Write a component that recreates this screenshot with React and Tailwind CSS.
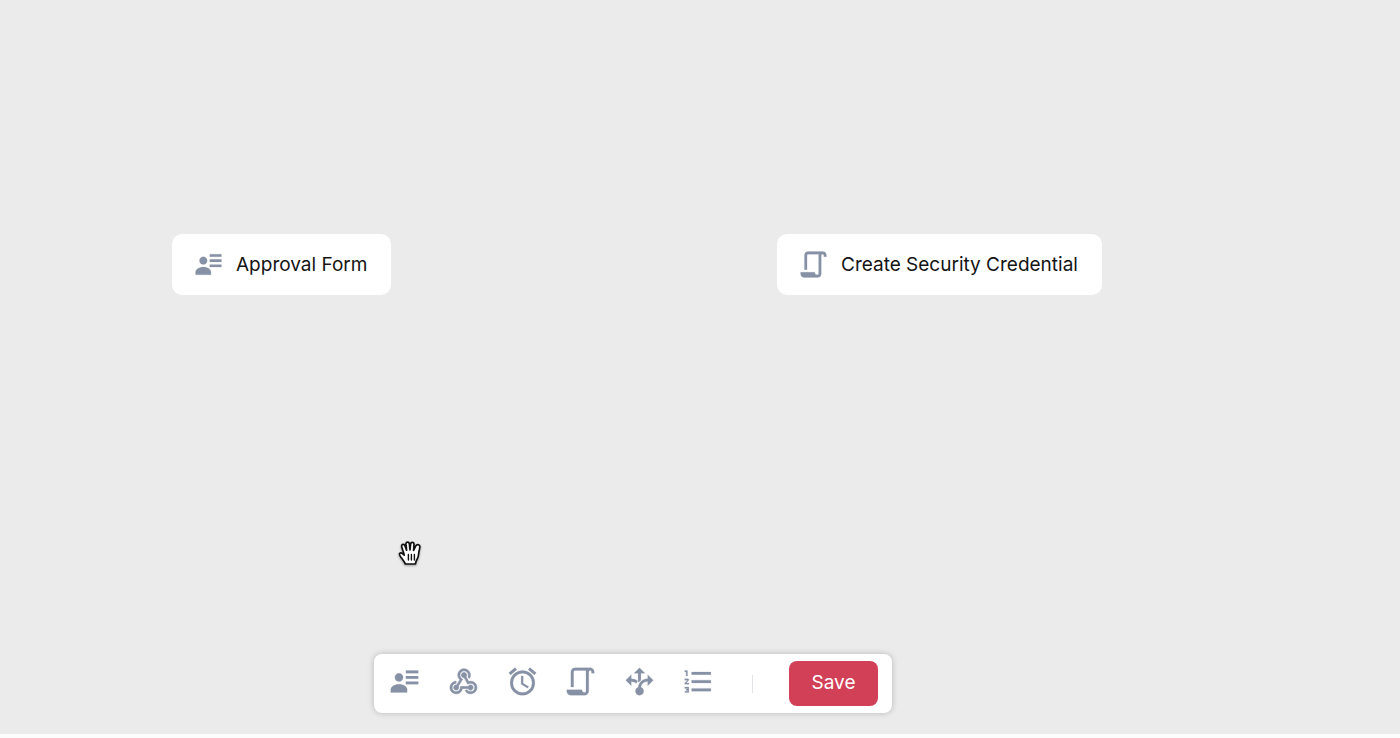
const PATHS = {
  form: "M11 9C11 10.66 9.66 12 8 12C6.34 12 5 10.66 5 9C5 7.34 6.34 6 8 6C9.66 6 11 7.34 11 9M14 20H2V18C2 15.79 4.69 14 8 14C11.31 14 14 15.79 14 18M22 12V14H13V12M22 8V10H13V8M22 4V6H13V4Z",
  webhook:
    "M10.46,19C9,21.07 6.15,21.59 4.09,20.15C2.04,18.71 1.56,15.84 3,13.75C3.87,12.5 5.21,11.83 6.58,11.77L6.63,13.2C5.72,13.27 4.84,13.74 4.27,14.56C3.27,16 3.58,17.94 4.95,18.91C6.33,19.87 8.26,19.5 9.26,18.07C9.57,17.62 9.75,17.13 9.82,16.63V15.62L15.4,15.58L15.47,15.47C16,14.55 17.15,14.23 18.05,14.75C18.95,15.27 19.26,16.43 18.73,17.35C18.2,18.26 17.04,18.58 16.14,18.06C15.73,17.83 15.44,17.46 15.31,17.04L11.24,17.06C11.13,17.73 10.87,18.38 10.46,19M17.74,11.86C20.27,12.17 22.07,14.44 21.76,16.93C21.45,19.43 19.15,21.2 16.62,20.89C15.13,20.71 13.9,19.86 13.19,18.68L14.43,17.96C14.92,18.73 15.75,19.28 16.75,19.41C18.5,19.62 20.05,18.43 20.26,16.76C20.47,15.09 19.23,13.56 17.5,13.35C16.96,13.29 16.44,13.36 15.97,13.53L15.12,13.97L12.54,9.2H12.32C11.26,9.16 10.41,8.29 10.44,7.25C10.47,6.21 11.4,5.4 12.45,5.44C13.5,5.5 14.33,6.35 14.3,7.39C14.28,7.83 14.11,8.23 13.84,8.54L15.74,12.05C16.36,11.85 17.04,11.78 17.74,11.86M8.25,9.14C7.25,6.79 8.31,4.1 10.62,3.12C12.94,2.14 15.62,3.25 16.62,5.6C17.21,6.97 17.09,8.47 16.42,9.67L15.18,8.95C15.6,8.14 15.67,7.15 15.27,6.22C14.59,4.62 12.78,3.85 11.23,4.5C9.67,5.16 8.97,7 9.65,8.6C9.93,9.26 10.4,9.77 10.97,10.11L11.36,10.32L8.29,15.31C8.32,15.36 8.36,15.42 8.39,15.5C8.88,16.41 8.54,17.56 7.62,18.05C6.71,18.54 5.56,18.18 5.06,17.24C4.57,16.31 4.91,15.16 5.83,14.67C6.22,14.46 6.65,14.41 7.06,14.5L9.37,10.73C8.9,10.3 8.5,9.76 8.25,9.14Z",
  alarm:
    "M12,20A7,7 0 0,1 5,13A7,7 0 0,1 12,6A7,7 0 0,1 19,13A7,7 0 0,1 12,20M12,4A9,9 0 0,0 3,13A9,9 0 0,0 12,22A9,9 0 0,0 21,13A9,9 0 0,0 12,4M12.5,8H11V14L15.75,16.85L16.5,15.62L12.5,13.25V8M7.88,3.39L6.6,1.86L2,5.71L3.29,7.24L7.88,3.39M22,5.72L17.4,1.86L16.11,3.39L20.71,7.25L22,5.72Z",
  script:
    "M15,20A1,1 0 0,0 16,19V4H8A1,1 0 0,0 7,5V16H5V5A3,3 0 0,1 8,2H19A3,3 0 0,1 22,5V6H20V5A1,1 0 0,0 19,4A1,1 0 0,0 18,5V9L18,19A3,3 0 0,1 15,22H5A3,3 0 0,1 2,19V18H13A2,2 0 0,0 15,20Z",
  decision:
    "M9.64 13.4C8.63 12.5 7.34 12.03 6 12V15L2 11L6 7V10C7.67 10 9.3 10.57 10.63 11.59C10.22 12.15 9.89 12.76 9.64 13.4M18 15V12C17.5 12 13.5 12.16 13.05 16.2C14.61 16.75 15.43 18.47 14.88 20.03C14.33 21.59 12.61 22.41 11.05 21.86C9.5 21.3 8.67 19.59 9.22 18.03C9.5 17.17 10.2 16.5 11.05 16.2C11.34 12.61 14.4 9.88 18 10V7L22 11L18 15M13 6V11.13C12.35 11.54 11.79 12.04 11.28 12.61L11 12.21V6H8L12 2L16 6H13Z",
  list: "M7,13V11H21V13H7M7,19V17H21V19H7M7,7V5H21V7H7M3,8V5H2V4H4V8H3M2,17V16H5V20H2V19H4V18.5H3V17.5H4V17H2M4.25,10A0.75,0.75 0 0,1 5,10.75C5,10.95 4.92,11.14 4.79,11.27L3.12,13H5V14H2V13.08L4,11H2V10H4.25Z",
};

const TOOLS = [
  { icon: "form", label: "Form" },
  { icon: "webhook", label: "Webhook" },
  { icon: "alarm", label: "Timer" },
  { icon: "script", label: "Script" },
  { icon: "decision", label: "Decision" },
  { icon: "list", label: "List" },
];

function Icon({ name, className }) {
  return (
    <svg
      viewBox="0 0 24 24"
      fill="currentColor"
      stroke="currentColor"
      strokeWidth={name === "webhook" ? 0.45 : 0.15}
      aria-hidden="true"
      className={className}
    >
      <path d={PATHS[name]} />
    </svg>
  );
}

function Node({ icon, title, className }) {
  return (
    <div
      className={`absolute flex items-center gap-3 rounded-[10px] bg-white py-[15px] pr-6 pl-[21px] whitespace-nowrap ${className}`}
    >
      <Icon name={icon} className="size-[31px] shrink-0 text-[#8791a5]" />
      <span className="text-[19px] leading-[30px] text-[#141414]">{title}</span>
    </div>
  );
}

function HandCursor() {
  return (
    <svg
      viewBox="0 0 24 26"
      aria-hidden="true"
      className="pointer-events-none absolute top-[540px] left-[398px] h-[26px] w-6 drop-shadow-[0_1px_1px_rgba(0,0,0,0.35)]"
    >
      <path
        d="M7.3 24C6.5 21.4 4.6 19.6 3.3 17.8C2.3 16.4 1.2 14.9 1.5 13.8C1.9 12.6 3.4 12.6 4.5 13.6L6.2 15.2C5.9 12.6 4.4 9.6 3.8 7.2C3.4 5.5 3.9 4.6 4.8 4.4C5.9 4.1 6.6 4.9 7 6L8.6 10.2L8 4.4C7.9 3 8.5 2.2 9.5 2.2C10.6 2.1 11.3 2.9 11.4 4.1L12 9.8L12.6 4.2C12.7 3 13.4 2.3 14.4 2.4C15.5 2.5 16.1 3.3 16 4.5L15.6 10.4L17.8 5.9C18.4 4.9 19.4 4.3 20.5 4.8C21.6 5.3 22.1 6.4 21.8 7.6C21.2 10.2 20.6 12.6 20.5 14.8C20.4 17.6 19.2 19.2 18.4 20.6C17.9 21.6 17.6 22.8 17.5 24Z"
        fill="#fff"
        stroke="#111"
        strokeWidth="1.7"
        strokeLinejoin="round"
      />
      <path
        d="M10.4 14.5V20M13.4 14.5V20M16.4 14.5V20"
        stroke="#111"
        strokeWidth="1.4"
        strokeLinecap="round"
      />
    </svg>
  );
}

export default function App() {
  return (
    <div className="flex h-screen flex-col bg-[#fcfcfc] font-['Inter','Liberation_Sans',sans-serif]">
      <main className="relative grow overflow-hidden bg-[#ebebeb]">
        <Node icon="form" title="Approval Form" className="top-[234px] left-[172px]" />
        <Node
          icon="script"
          title="Create Security Credential"
          className="top-[234px] left-[777px]"
        />
        <HandCursor />
        <div
          role="toolbar"
          aria-label="Workflow steps"
          className="absolute bottom-[21px] left-[374px] flex items-center rounded-lg bg-white px-3.5 py-[7px] shadow-[0_0_6px_rgba(0,0,0,0.22)]"
        >
          <div className="flex w-[327px] justify-between pb-1">
            {TOOLS.map(({ icon, label }) => (
              <button key={icon} type="button" aria-label={label} className="text-[#8791a5]">
                <Icon name={icon} className="size-[33px]" />
              </button>
            ))}
          </div>
          <div className="mr-9 ml-[37px] h-[18px] w-px bg-[#e4e4e8]" />
          <button
            type="button"
            className="h-[45px] w-[89px] rounded-lg bg-[#d14057] text-[19px] text-white"
          >
            Save
          </button>
        </div>
      </main>
      <footer className="h-1 shrink-0" />
    </div>
  );
}
